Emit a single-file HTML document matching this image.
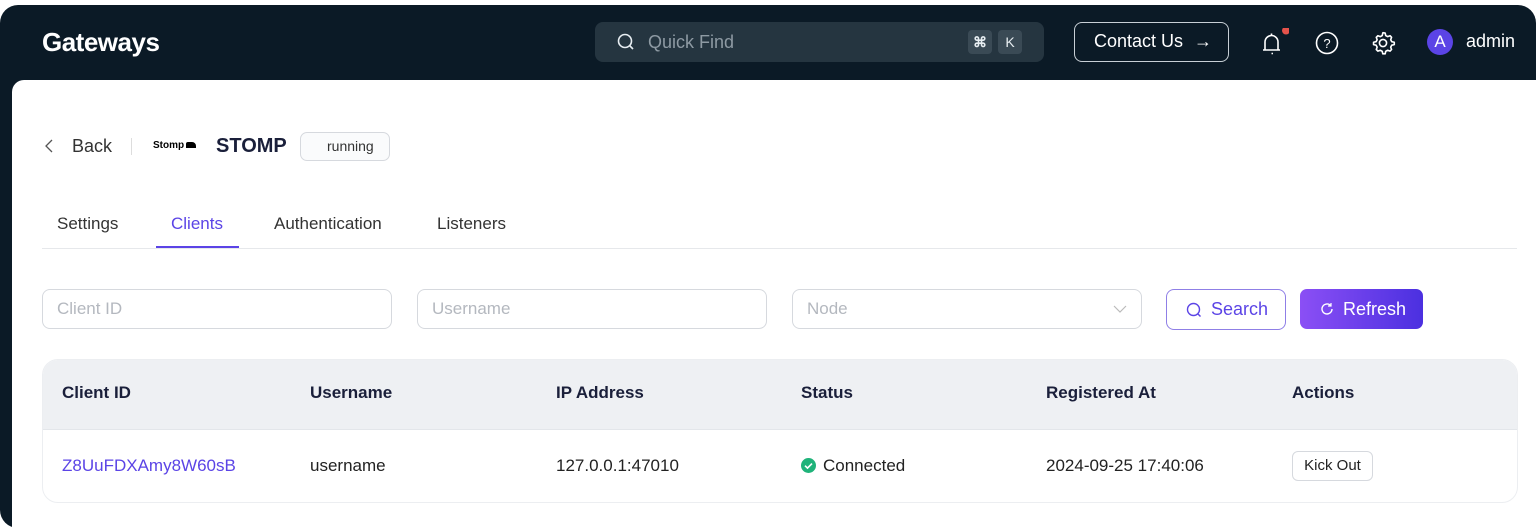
<!DOCTYPE html>
<html><head><meta charset="utf-8"><style>
*{box-sizing:border-box;margin:0;padding:0}
body{width:1536px;height:531px;background:#fff;font-family:"Liberation Sans",sans-serif;position:relative;overflow:hidden}
.frame{position:absolute;left:0;top:5px;width:1536px;height:523px;background:#0b1a26;border-radius:18px 18px 0 18px}
.panel{position:absolute;left:12px;top:80px;width:1524px;height:451px;background:#fff;border-radius:12px 0 0 0}
.abs{position:absolute}
.title{left:42px;top:27px;color:#fff;font-weight:bold;font-size:26px;letter-spacing:-0.5px}
.qf{left:595px;top:22px;width:449px;height:40px;background:#253540;border-radius:8px}
.key{position:absolute;top:8px;width:24px;height:24px;background:#3a4a55;border-radius:4px;color:#e8eef2;font-size:14px;text-align:center;line-height:24px;font-weight:bold}
.contact{left:1074px;top:22px;width:155px;height:40px;border:1.5px solid #c8d0d6;border-radius:8px;color:#fff;font-size:18px;line-height:37px;padding-left:19px}
.th{font-weight:bold;color:#1a1f3a;font-size:17px;top:383px}
.td{color:#222;font-size:17px;top:456px}
.inp{top:289px;width:350px;height:40px;border:1px solid #d6d9de;border-radius:8px;color:#b4b8bf;font-size:17px;line-height:38px;padding-left:14px}
</style></head><body>
<div class="frame"></div>
<div class="abs title">Gateways</div>
<div class="abs qf">
<svg class="abs" style="left:22px;top:11px" width="18" height="18" viewBox="0 0 18 18"><circle cx="8" cy="8" r="6.5" fill="none" stroke="#e8eef2" stroke-width="1.6"/><path d="M13 13l3 3" stroke="#e8eef2" stroke-width="1.6"/></svg>
<div class="abs" style="left:53px;top:10px;color:#8e9aa3;font-size:18px">Quick Find</div>
<div class="key" style="left:373px">⌘</div><div class="key" style="left:403px;font-weight:normal">K</div>
</div>
<div class="abs contact">Contact Us <span style="margin-left:6px">→</span></div>
<svg class="abs" style="left:1259px;top:28px" width="30" height="30" viewBox="0 0 30 30"><path d="M4 22h17M6 22v-8a6.5 6.5 0 0113 0v8M12.5 25.5h1.5" fill="none" stroke="#fff" stroke-width="1.6"/><path d="M12.5 5.5v2" stroke="#fff" stroke-width="1.6"/><circle cx="27" cy="2.5" r="4" fill="#e5534b"/></svg>
<svg class="abs" style="left:1315px;top:31px" width="24" height="24" viewBox="0 0 24 24"><circle cx="12" cy="12" r="10.5" fill="none" stroke="#fff" stroke-width="1.6"/><text x="12" y="17" text-anchor="middle" fill="#fff" font-size="13" font-family="Liberation Sans">?</text></svg>
<svg class="abs" style="left:1370px;top:30px" width="26" height="26" viewBox="0 0 24 24"><path d="M12 2.5l2 .3.5 2.3 1.8 1 2.2-.8 1.4 1.5-.8 2.2 1 1.8 2.3.5v2.2l-2.3.5-1 1.8.8 2.2-1.4 1.5-2.2-.8-1.8 1-.5 2.3h-2.2l-.5-2.3-1.8-1-2.2.8-1.5-1.5.8-2.2-1-1.8-2.3-.5v-2.2l2.3-.5 1-1.8-.8-2.2 1.5-1.5 2.2.8 1.8-1 .5-2.3z" fill="none" stroke="#fff" stroke-width="1.5" stroke-linejoin="round"/><circle cx="12" cy="12" r="3.3" fill="none" stroke="#fff" stroke-width="1.5"/></svg>
<div class="abs" style="left:1427px;top:29px;width:26px;height:26px;border-radius:50%;background:#5b44e6;color:#fff;font-size:17px;text-align:center;line-height:26px">A</div>
<div class="abs" style="left:1466px;top:31px;color:#fff;font-size:18px">admin</div>

<div class="panel"></div>
<svg class="abs" style="left:44px;top:139px" width="12" height="14" viewBox="0 0 12 14"><path d="M8 1L2 7l6 6" fill="none" stroke="#555" stroke-width="1.3"/></svg>
<div class="abs" style="left:72px;top:136px;font-size:18px;color:#333">Back</div>
<div class="abs" style="left:131px;top:138px;width:1px;height:17px;background:#ddd"></div>
<div class="abs" style="left:153px;top:140px;font-size:10px;font-weight:bold;color:#000">Stomp<span style="display:inline-block;width:10px;height:6px;background:#000;margin-left:2px;border-radius:2px 4px 0 0"></span></div>
<div class="abs" style="left:216px;top:135px;font-size:20px;font-weight:bold;color:#1a1f3a">STOMP</div>
<div class="abs" style="left:300px;top:132px;width:90px;height:29px;border:1px solid #d6d9de;border-radius:7px;background:#fafbfc;font-size:14px;color:#333;line-height:27px;padding-left:26px">running</div>

<div class="abs" style="left:57px;top:214px;font-size:17px;color:#333">Settings</div>
<div class="abs" style="left:171px;top:214px;font-size:17px;color:#5b44e6">Clients</div>
<div class="abs" style="left:274px;top:214px;font-size:17px;color:#333">Authentication</div>
<div class="abs" style="left:437px;top:214px;font-size:17px;color:#333">Listeners</div>
<div class="abs" style="left:42px;top:248px;width:1475px;height:1px;background:#e6e8eb"></div>
<div class="abs" style="left:156px;top:246px;width:83px;height:2px;background:#5b44e6"></div>

<div class="abs inp" style="left:42px">Client ID</div>
<div class="abs inp" style="left:417px">Username</div>
<div class="abs inp" style="left:792px">Node
<svg class="abs" style="left:320px;top:15px" width="14" height="9" viewBox="0 0 14 9"><path d="M1 1l6 6 6-6" fill="none" stroke="#bbb" stroke-width="1.2"/></svg></div>
<div class="abs" style="left:1166px;top:289px;width:120px;height:41px;border:1.5px solid #8f7fe6;border-radius:8px;color:#5b44e6;font-size:18px;line-height:38px;padding-left:44px">Search
<svg class="abs" style="left:19px;top:12px" width="16" height="16" viewBox="0 0 16 16"><circle cx="7.5" cy="7.5" r="6" fill="none" stroke="#5b44e6" stroke-width="1.4"/><path d="M12 12l2.5 2.5" stroke="#5b44e6" stroke-width="1.4"/></svg></div>
<div class="abs" style="left:1300px;top:289px;width:123px;height:40px;border-radius:7px;background:linear-gradient(90deg,#8b4ff5,#4b30e0);color:#fff;font-size:18px;line-height:40px;padding-left:43px">Refresh
<svg class="abs" style="left:20px;top:13px" width="14" height="14" viewBox="0 0 14 14"><path d="M12 7a5 5 0 11-1.5-3.6" fill="none" stroke="#fff" stroke-width="1.4"/><path d="M11 1v3h-3" fill="none" stroke="#fff" stroke-width="1.2"/></svg></div>

<div class="abs" style="left:42px;top:359px;width:1476px;height:144px;border:1px solid #eceef1;border-radius:16px;overflow:hidden">
<div style="height:70px;background:#eef0f3;border-bottom:1px solid #e3e6ea"></div></div>
<div class="abs th" style="left:62px">Client ID</div>
<div class="abs th" style="left:310px">Username</div>
<div class="abs th" style="left:556px">IP Address</div>
<div class="abs th" style="left:801px">Status</div>
<div class="abs th" style="left:1046px">Registered At</div>
<div class="abs th" style="left:1292px">Actions</div>
<div class="abs td" style="left:62px;color:#5b44e6">Z8UuFDXAmy8W60sB</div>
<div class="abs td" style="left:310px">username</div>
<div class="abs td" style="left:556px">127.0.0.1:47010</div>
<svg class="abs" style="left:801px;top:458px" width="15" height="15" viewBox="0 0 15 15"><circle cx="7.5" cy="7.5" r="7.5" fill="#1fb37a"/><path d="M4 7.7l2.5 2.4 4.5-4.5" fill="none" stroke="#fff" stroke-width="1.6"/></svg>
<div class="abs td" style="left:823px">Connected</div>
<div class="abs td" style="left:1046px">2024-09-25 17:40:06</div>
<div class="abs" style="left:1292px;top:451px;width:81px;height:30px;border:1px solid #d6d9de;border-radius:6px;font-size:15px;color:#222;text-align:center;line-height:28px">Kick Out</div>
</body></html>
